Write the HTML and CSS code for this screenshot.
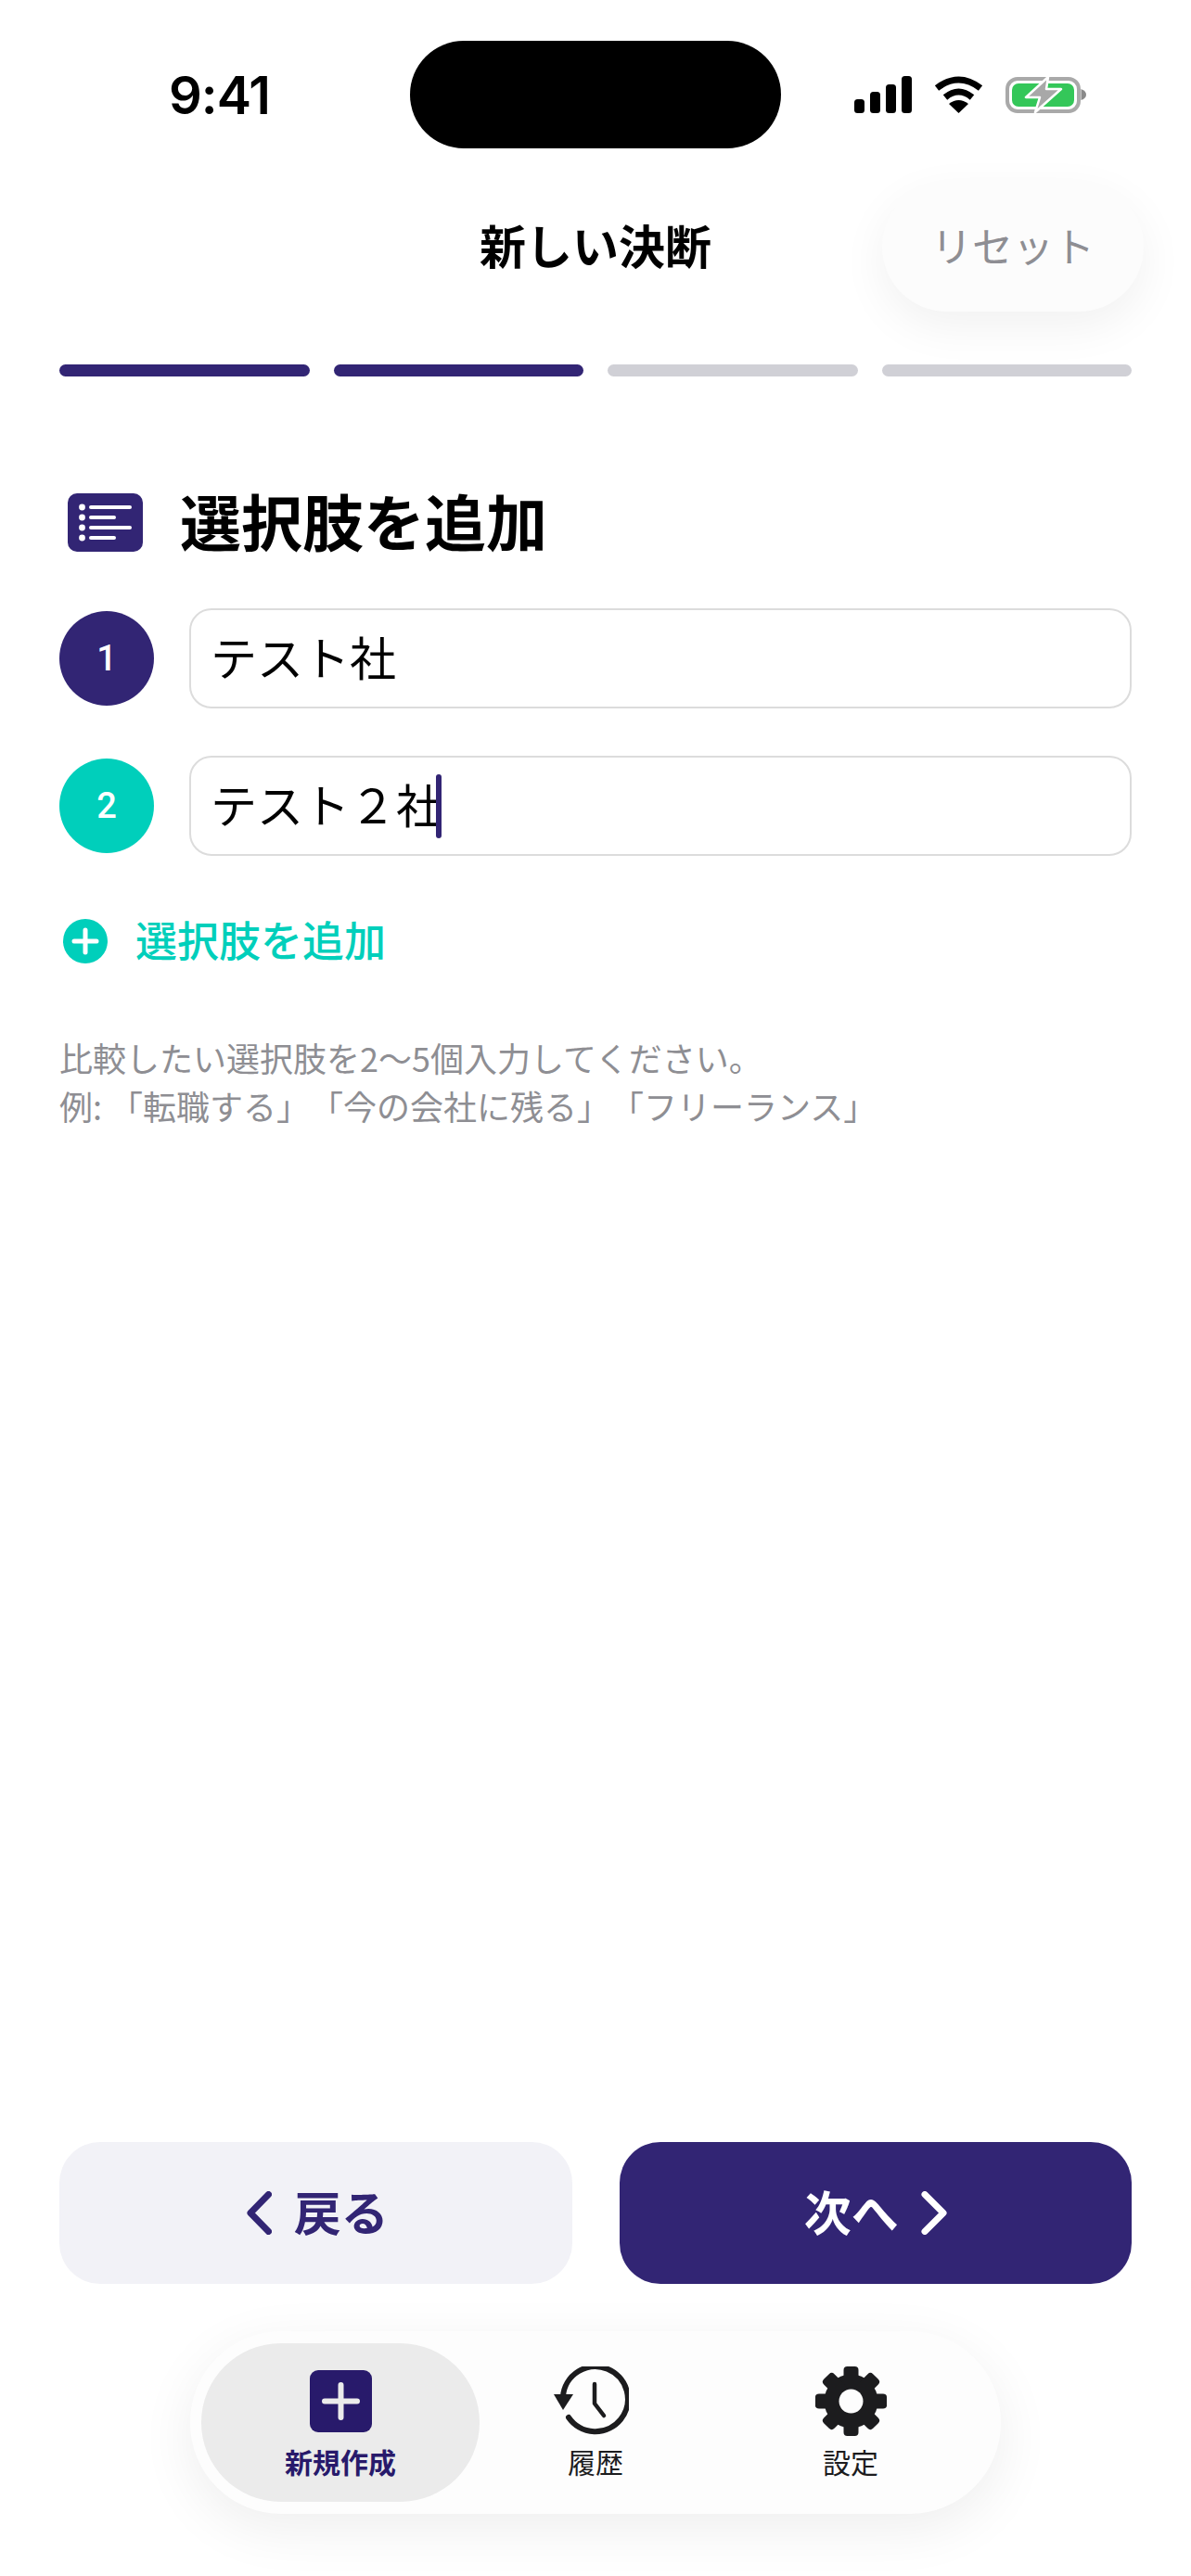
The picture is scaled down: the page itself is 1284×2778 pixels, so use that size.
FILE: index.html
```html
<!DOCTYPE html>
<html lang="ja">
<head>
    <meta charset="UTF-8">
    <meta name="viewport" content="width=device-width, initial-scale=1.0">
    <title>新しい決断</title>
    <link rel="stylesheet" href="styles.css">
</head>
<body>
    <div class="screen">
        <div class="status-bar">
            <div class="status-time">9:41</div>
            <div class="island"></div>
            <div class="status-icons">
                <svg class="icon-signal" width="62" height="40" viewBox="0 0 62 40">
                    <rect x="0" y="25" width="11" height="15" rx="3.5"/>
                    <rect x="17" y="17" width="11" height="23" rx="3.5"/>
                    <rect x="34" y="9" width="11" height="31" rx="3.5"/>
                    <rect x="51" y="0" width="11" height="40" rx="3.5"/>
                </svg>
                <svg class="icon-wifi" width="53" height="40" viewBox="0 0 53 40">
                    <path d="M3 13 Q26.5 -5 50 13" fill="none" stroke="#000" stroke-width="7"/>
                    <path d="M12 23 Q26.5 11 41 23" fill="none" stroke="#000" stroke-width="7"/>
                    <path d="M26.5 40 L16 30 Q26.5 22 37 30 Z"/>
                </svg>
                <svg class="icon-battery" width="87" height="40" viewBox="0 0 87 40">
                    <rect x="2" y="3" width="77" height="35" rx="11" fill="none" stroke="#a9a9a9" stroke-width="4"/>
                    <rect x="7" y="8" width="67" height="25" rx="7" fill="#34c759"/>
                    <path d="M81.5 14 Q87 16 87 20 Q87 24 81.5 26 Z" fill="#8a8a8a"/>
                    <path d="M46 1 L22 23 L37 23 L32 39 L60 14 L44 14 Z" fill="#a8a8a8" stroke="#fff" stroke-width="2.5" stroke-linejoin="round"/>
                </svg>
            </div>
        </div>

        <header class="nav-header">
            <h1 class="nav-title">新しい決断</h1>
            <button class="reset-btn">リセット</button>
        </header>

        <div class="progress">
            <div class="progress-step done"></div>
            <div class="progress-step done"></div>
            <div class="progress-step"></div>
            <div class="progress-step"></div>
        </div>

        <div class="section-head">
            <svg width="81" height="63" viewBox="0 0 81 63">
                <rect width="81" height="63" rx="10" fill="#322574"/>
                <g fill="#fff">
                    <circle cx="15.5" cy="15" r="3.4"/>
                    <circle cx="15.5" cy="26" r="3.4"/>
                    <circle cx="15.5" cy="37" r="3.4"/>
                    <circle cx="15.5" cy="48" r="3.4"/>
                </g>
                <g stroke="#fff" stroke-width="4" stroke-linecap="round">
                    <path d="M25 15 H67"/>
                    <path d="M25 26 H50"/>
                    <path d="M25 37 H67"/>
                    <path d="M25 48 H50"/>
                </g>
            </svg>
            <h2 class="section-title">選択肢を追加</h2>
        </div>

        <div class="options">
            <div class="option-row">
                <div class="option-num num-first">1</div>
                <div class="option-input">テスト社</div>
            </div>
            <div class="option-row">
                <div class="option-num num-second">2</div>
                <div class="option-input">テスト２社<span class="caret"></span></div>
            </div>
        </div>

        <div class="add-option">
            <svg width="48" height="48" viewBox="0 0 48 48">
                <circle cx="24" cy="24" r="24" fill="#00cfbb"/>
                <path d="M12 24 H36 M24 12 V36" stroke="#fff" stroke-width="5" stroke-linecap="round"/>
            </svg>
            <span>選択肢を追加</span>
        </div>

        <p class="helper">比較したい選択肢を2〜5個入力してください。<br>例: 「転職する」「今の会社に残る」「フリーランス」</p>

        <div class="actions">
            <button class="action-btn btn-back">
                <svg width="27" height="47" viewBox="0 0 27 47">
                    <path d="M23.5 3.5 L4 23.5 L23.5 43.5" fill="none" stroke="#322574" stroke-width="7" stroke-linecap="round" stroke-linejoin="round"/>
                </svg>
                <span>戻る</span>
            </button>
            <button class="action-btn btn-next">
                <span>次へ</span>
                <svg width="28" height="47" viewBox="0 0 28 47">
                    <path d="M4 3.5 L24 23.5 L4 43.5" fill="none" stroke="#fff" stroke-width="7" stroke-linecap="round" stroke-linejoin="round"/>
                </svg>
            </button>
        </div>

        <nav class="tab-bar">
            <div class="tab tab-active">
                <svg width="67" height="75" viewBox="0 0 67 75">
                    <rect y="4" width="67" height="67" rx="9" fill="#281a6b"/>
                    <path d="M16 37.5 H51 M33.5 20 V55" stroke="#ebebeb" stroke-width="6" stroke-linecap="round"/>
                </svg>
                <span>新規作成</span>
            </div>
            <div class="tab">
                <svg class="icon-history" width="81" height="75" viewBox="0 0 81 75">
                    <path d="M10 32 A35 35 0 1 1 16 55" fill="none" stroke="#1c1c1e" stroke-width="6" stroke-linecap="round"/>
                    <path d="M0 30 H21 L10 47 Z" fill="#1c1c1e"/>
                    <path d="M44 19 V40 L54 53" fill="none" stroke="#1c1c1e" stroke-width="4.5" stroke-linecap="round" stroke-linejoin="round"/>
                </svg>
                <span>履歴</span>
            </div>
            <div class="tab">
                <svg width="77" height="75" viewBox="-38.5 -37.5 77 75">
                    <circle r="29" fill="#1c1c1e"/>
                    <g fill="#1c1c1e">
                        <rect x="-8" y="-37.5" width="16" height="75" rx="4"/>
                        <rect x="-8" y="-37.5" width="16" height="75" rx="4" transform="rotate(45)"/>
                        <rect x="-8" y="-37.5" width="16" height="75" rx="4" transform="rotate(90) scale(1 1.03)"/>
                        <rect x="-8" y="-37.5" width="16" height="75" rx="4" transform="rotate(135)"/>
                    </g>
                    <circle r="13" fill="#fdfdfd"/>
                </svg>
                <span>設定</span>
            </div>
        </nav>
    </div>
</body>
</html>
```

FILE: styles.css
```css
* {
    box-sizing: border-box;
}
body {
    margin: 0;
    background-color: #fff;
    color: #000;
    font-family: "Noto Sans CJK JP", "Noto Sans", sans-serif;
    text-spacing-trim: space-all;
}
.screen {
    width: 1284px;
    height: 2778px;
    padding: 44px 64px 67px;
    display: flex;
    flex-direction: column;
    overflow: hidden;
}

/* status bar */
.status-bar {
    height: 116px;
    display: grid;
    grid-template-columns: 378px 400px 1fr;
    align-items: center;
}
.status-time {
    font-family: Inter, "Liberation Sans", sans-serif;
    font-size: 56px;
    font-weight: 600;
    letter-spacing: -1px;
    padding: 2px 0 0 118px;
}
.island {
    width: 400px;
    height: 116px;
    border-radius: 58px;
    background-color: #000;
}
.status-icons {
    display: flex;
    align-items: center;
    gap: 24px;
    padding-left: 79px;
}
.status-icons svg {
    flex: none;
}

/* header */
.nav-header {
    margin-top: 36px;
    height: 140px;
    display: grid;
    grid-template-columns: 1fr auto 1fr;
    align-items: center;
}
.nav-title {
    grid-column: 2;
    margin: 0;
    font-size: 50px;
    font-weight: 700;
    line-height: 1;
    padding-bottom: 7px;
}
.reset-btn {
    grid-column: 3;
    justify-self: end;
    width: 282px;
    height: 140px;
    margin-right: -13px;
    border: 0;
    border-radius: 70px;
    background-color: #fcfcfc;
    box-shadow: 0 16px 50px rgba(0, 0, 0, 0.06);
    color: #8e8e93;
    font-family: inherit;
    font-size: 44px;
    padding: 0 0 4px;
}

/* progress */
.progress {
    margin-top: 57px;
    display: flex;
    gap: 26px;
}
.progress-step {
    flex: 1;
    height: 13px;
    border-radius: 7px;
    background-color: #d0d0d6;
}
.progress-step.done {
    background-color: #322574;
}

/* section */
.section-head {
    margin-top: 126px;
    height: 63px;
    padding-left: 9px;
    display: flex;
    align-items: center;
    gap: 40px;
}
.section-head svg {
    flex: none;
}
.section-title {
    margin: 0 0 8px;
    font-size: 66px;
    font-weight: 700;
    line-height: 1;
}
.options {
    margin-top: 61px;
    display: flex;
    flex-direction: column;
    gap: 51px;
}
.option-row {
    display: flex;
    align-items: center;
    gap: 38px;
}
.option-num {
    width: 102px;
    height: 102px;
    border-radius: 50%;
    display: flex;
    align-items: center;
    justify-content: center;
    color: #fff;
    font-family: Roboto, sans-serif;
    font-size: 38px;
    font-weight: 500;
}
.num-first {
    background-color: #322574;
}
.num-second {
    background-color: #00cfbb;
}
.option-input {
    flex: 1;
    height: 108px;
    padding: 0 0 6px 21px;
    display: flex;
    align-items: center;
    border: 2px solid #dcdcdc;
    border-radius: 24px;
    font-size: 50px;
    line-height: 1;
}
.caret {
    width: 6px;
    height: 69px;
    margin: 6px 0 0 -7px;
    border-radius: 3px;
    background-color: #322574;
}
.add-option {
    margin-top: 68px;
    padding-left: 4px;
    height: 48px;
    display: flex;
    align-items: center;
    gap: 30px;
    color: #00cfbb;
    font-size: 45px;
    font-weight: 500;
    line-height: 1;
}
.add-option span {
    padding-bottom: 5px;
}
.helper {
    margin: 75px 0 0;
    color: #8e8e93;
    font-size: 36px;
    line-height: 52px;
}

/* bottom buttons */
.actions {
    margin-top: auto;
    display: grid;
    grid-template-columns: 1fr 1fr;
    gap: 51px;
}
.action-btn {
    height: 153px;
    border: 0;
    border-radius: 44px;
    display: flex;
    align-items: center;
    justify-content: center;
    gap: 24px;
    font-family: inherit;
    font-size: 51px;
    font-weight: 700;
    padding: 0;
}
.action-btn span {
    padding-bottom: 5px;
}
.btn-back {
    padding-left: 4px;
    background-color: #f2f2f7;
    color: #322574;
}
.btn-next {
    background-color: #322574;
    color: #fff;
}

/* tab bar */
.tab-bar {
    margin-top: 51px;
    align-self: center;
    width: 874px;
    height: 197px;
    padding: 13px 12px;
    display: flex;
    border-radius: 98px;
    background-color: #fdfdfd;
    box-shadow: 0 16px 60px rgba(0, 0, 0, 0.07);
}
.tab {
    width: 300px;
    display: flex;
    flex-direction: column;
    align-items: center;
    padding-top: 25px;
    gap: 7px;
    color: #1c1c1e;
    font-size: 30px;
    line-height: 40px;
}
.tab svg {
    flex: none;
}
.icon-history {
    margin-right: 10px;
}
.tab:nth-child(2) {
    width: 250px;
}
.tab-active {
    border-radius: 86px;
    background-color: #ebebeb;
    color: #281a6b;
    font-weight: 700;
}
```
